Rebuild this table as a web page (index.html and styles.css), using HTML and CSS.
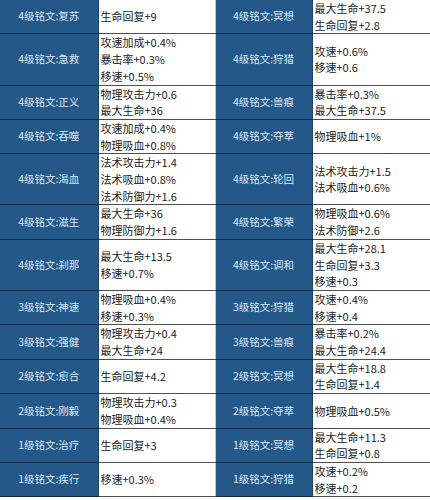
FILE: index.html
```html
<!DOCTYPE html>
<html lang="zh">
<head>
<meta charset="utf-8">
<link rel="stylesheet" href="styles.css">
</head>
<body>
<table class="runes">
<colgroup><col class="c-label"><col class="c-stat"><col class="c-label2"><col class="c-stat2"></colgroup>
<tr><td class="lbl">4级铭文:复苏</td><td class="st">生命回复+9</td><td class="lbl">4级铭文:冥想</td><td class="st">最大生命+37.5<br>生命回复+2.8</td></tr>
<tr><td class="lbl">4级铭文:急救</td><td class="st">攻速加成+0.4%<br>暴击率+0.3%<br>移速+0.5%</td><td class="lbl">4级铭文:狩猎</td><td class="st">攻速+0.6%<br>移速+0.6</td></tr>
<tr><td class="lbl">4级铭文:正义</td><td class="st">物理攻击力+0.6<br>最大生命+36</td><td class="lbl">4级铭文:兽痕</td><td class="st">暴击率+0.3%<br>最大生命+37.5</td></tr>
<tr><td class="lbl">4级铭文:吞噬</td><td class="st">攻速加成+0.4%<br>物理吸血+0.8%</td><td class="lbl">4级铭文:夺萃</td><td class="st">物理吸血+1%</td></tr>
<tr><td class="lbl">4级铭文:渴血</td><td class="st">法术攻击力+1.4<br>法术吸血+0.8%<br>法术防御力+1.6</td><td class="lbl">4级铭文:轮回</td><td class="st">法术攻击力+1.5<br>法术吸血+0.6%</td></tr>
<tr><td class="lbl">4级铭文:滋生</td><td class="st">最大生命+36<br>物理防御力+1.6</td><td class="lbl">4级铭文:繁荣</td><td class="st">物理吸血+0.6%<br>法术防御+2.6</td></tr>
<tr><td class="lbl">4级铭文:刹那</td><td class="st">最大生命+13.5<br>移速+0.7%</td><td class="lbl">4级铭文:调和</td><td class="st">最大生命+28.1<br>生命回复+3.3<br>移速+0.3</td></tr>
<tr><td class="lbl">3级铭文:神速</td><td class="st">物理吸血+0.4%<br>移速+0.3%</td><td class="lbl">3级铭文:狩猎</td><td class="st">攻速+0.4%<br>移速+0.4</td></tr>
<tr><td class="lbl">3级铭文:强健</td><td class="st">物理攻击力+0.4<br>最大生命+24</td><td class="lbl">3级铭文:兽痕</td><td class="st">暴击率+0.2%<br>最大生命+24.4</td></tr>
<tr><td class="lbl">2级铭文:愈合</td><td class="st">生命回复+4.2</td><td class="lbl">2级铭文:冥想</td><td class="st">最大生命+18.8<br>生命回复+1.4</td></tr>
<tr><td class="lbl">2级铭文:刚毅</td><td class="st">物理攻击力+0.3<br>物理吸血+0.4%</td><td class="lbl">2级铭文:夺萃</td><td class="st">物理吸血+0.5%</td></tr>
<tr><td class="lbl">1级铭文:治疗</td><td class="st">生命回复+3</td><td class="lbl">1级铭文:冥想</td><td class="st">最大生命+11.3<br>生命回复+0.8</td></tr>
<tr><td class="lbl">1级铭文:疾行</td><td class="st">移速+0.3%</td><td class="lbl">1级铭文:狩猎</td><td class="st">攻速+0.2%<br>移速+0.2</td></tr>
</table>
</body>
</html>
```

FILE: styles.css
```css
html, body {
  margin: 0;
  padding: 0;
  background: #ffffff;
}
.runes {
  border-collapse: collapse;
  table-layout: fixed;
  width: 430px;
  font-family: "Noto Sans CJK SC", "Noto Sans", sans-serif;
}
.c-label { width: 98px; }
.c-stat { width: 117px; }
.c-label2 { width: 97px; }
.c-stat2 { width: 118px; }
.runes td {
  padding: 0;
  line-height: 16.7px;
  vertical-align: middle;
  white-space: nowrap;
}
.lbl {
  background: #245889;
  color: #dde8f4;
  font-size: 10.5px;
  text-align: center;
  border-bottom: 1px solid #0f2b48;
  border-right: 1px solid #1a4570;
}
.st {
  background: #ffffff;
  color: #1c1c1c;
  font-size: 11px;
  padding-left: 2px !important;
  border-bottom: 1px solid #505050;
  border-right: 1px solid #c8c8c8;
}
```
